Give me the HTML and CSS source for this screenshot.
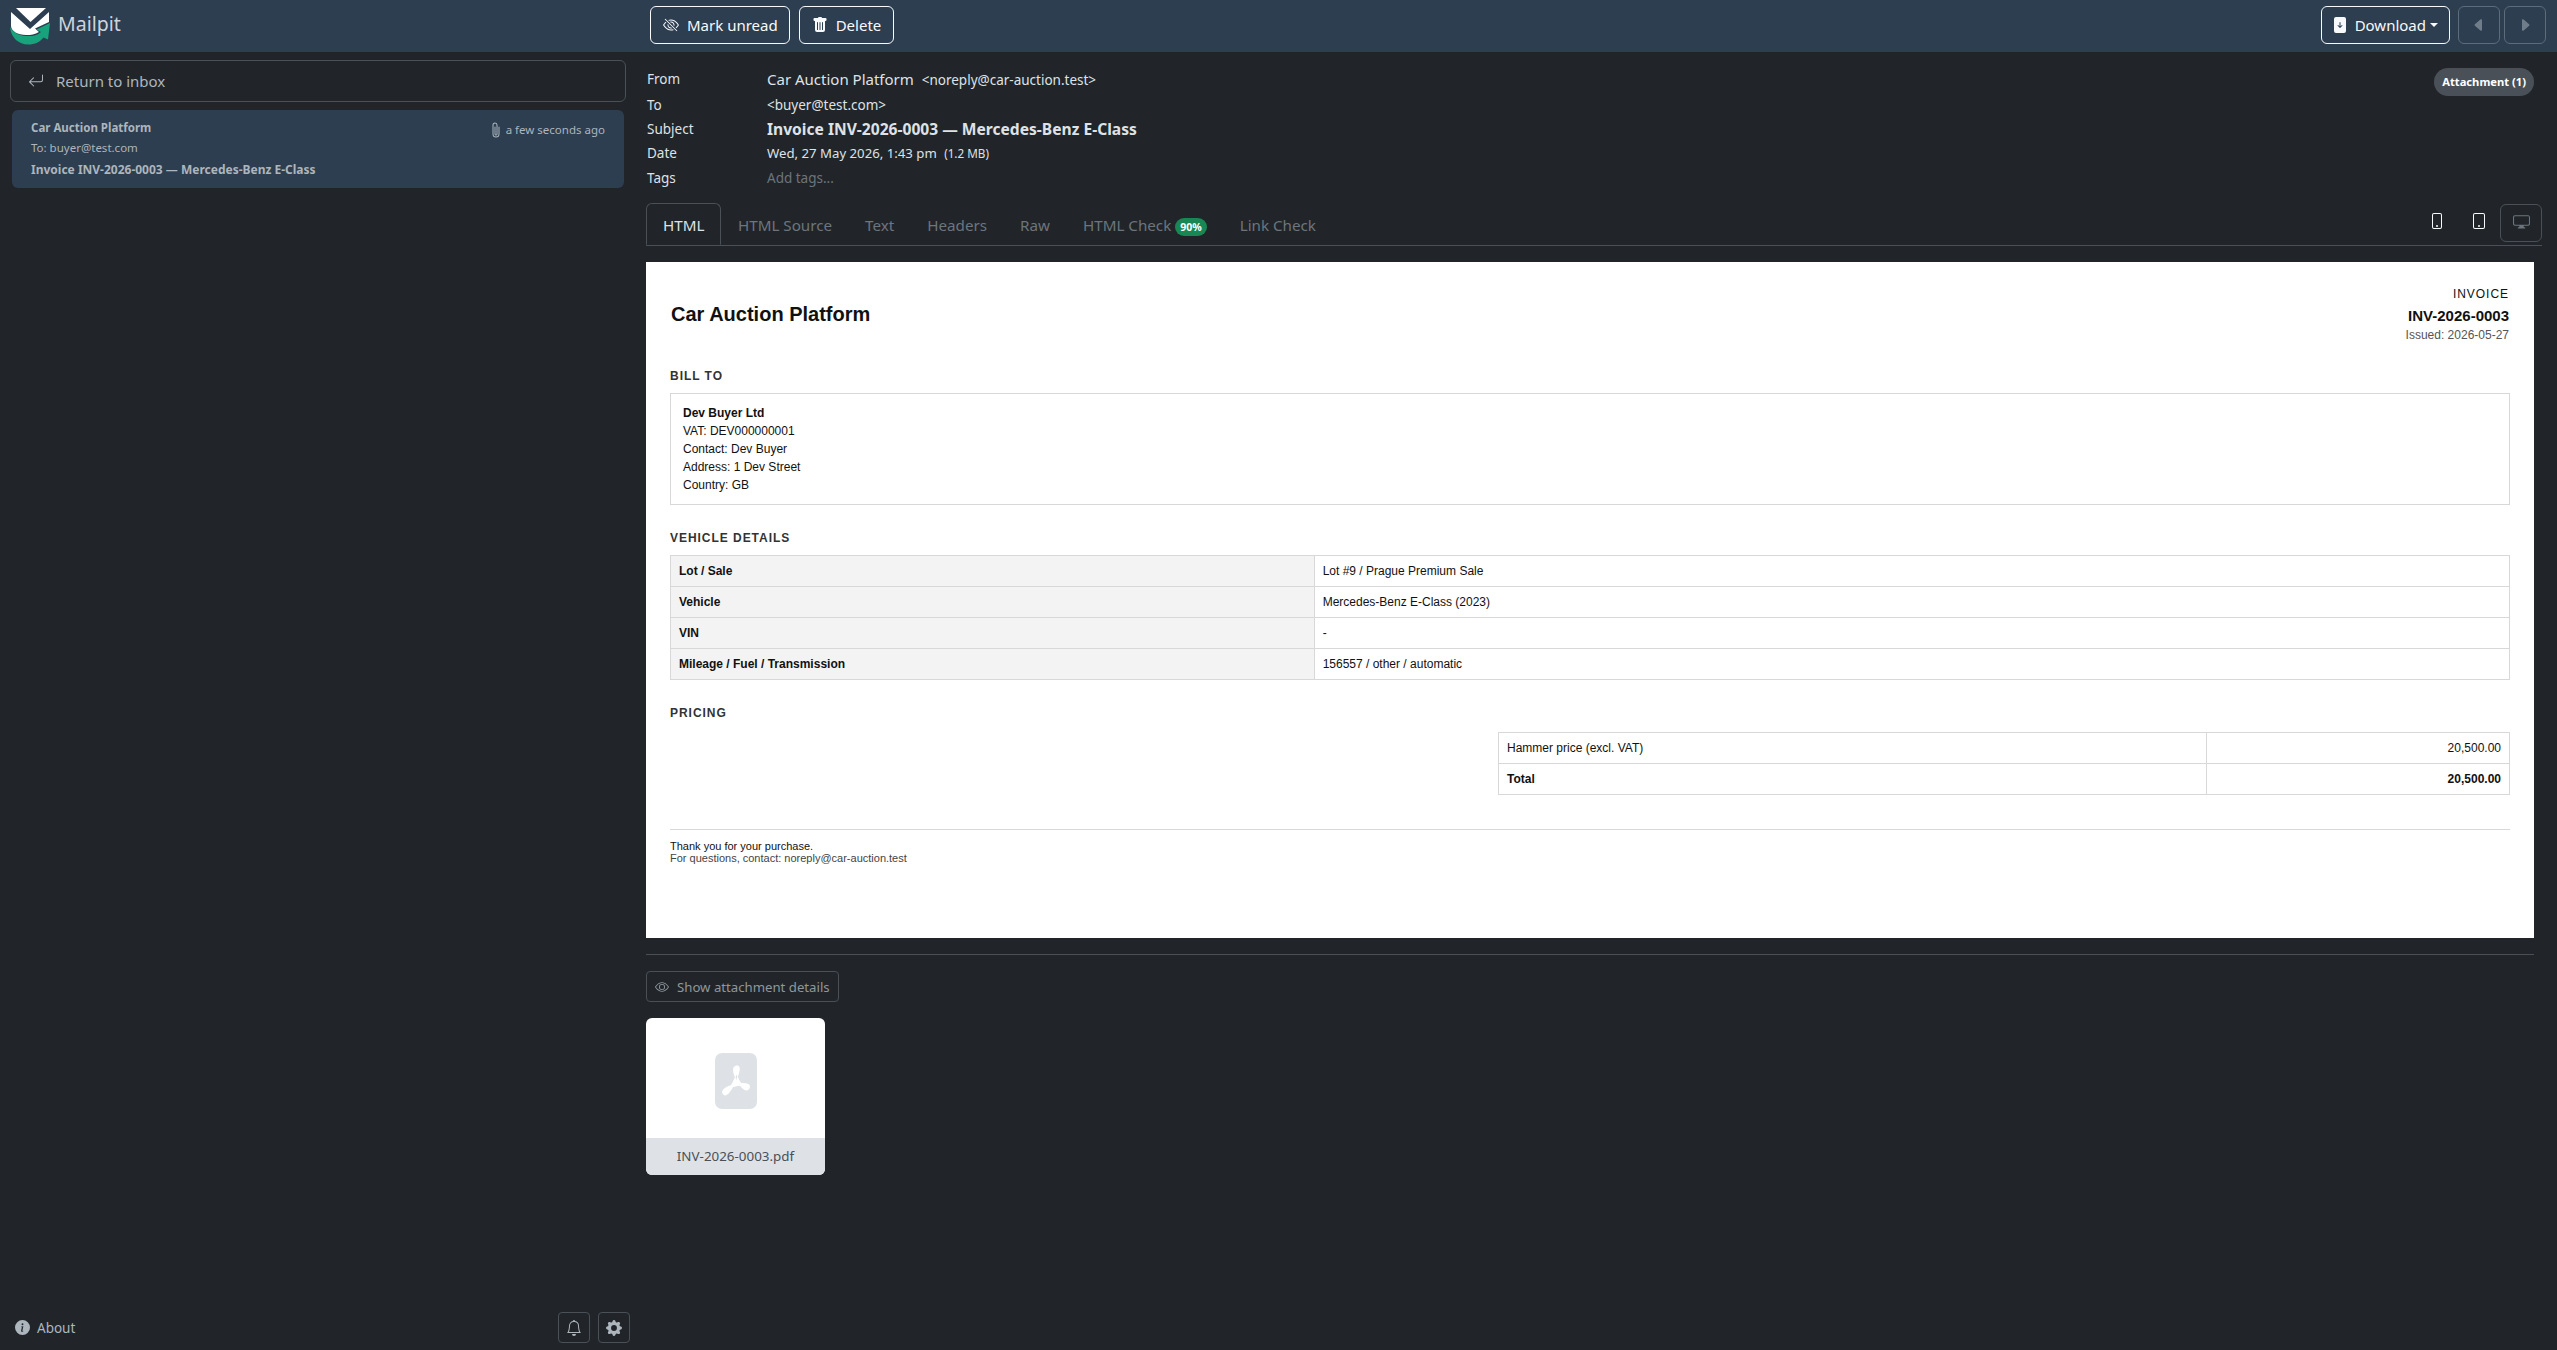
FILE: index.html
```html
<!DOCTYPE html>
<html lang="en">
<head>
    <meta charset="UTF-8">
    <meta name="viewport" content="width=device-width, initial-scale=1.0">
    <title>Invoice INV-2026-0003 — Mercedes-Benz E-Class - Mailpit</title>
    <link rel="stylesheet" href="styles.css">
</head>
<body>
    <header class="topbar">
        <div class="brand">
            <svg class="logo" viewBox="10 7 40 37" width="40" height="37">
                <path d="M10 26C11 37 19 43.500 28 43.500C35 43.500 40 41 43.500 36.500L48 38.500L50 22L36.500 28.500L41 31C37 34.500 32 35.500 26 35C18 34.500 13 31 10 26z" fill="#17a47d"/>
                <path d="M11 11L30 28L49 11V21L35 27.500L39 31C35 33.500 31 34 26 34C18 34 11 30 11 25z" fill="#fff"/>
                <path d="M16 7H46L30.500 21z" fill="#fff"/>
            </svg>
            <span class="brand-name">Mailpit</span>
        </div>
        <div class="actions">
            <button class="btn btn-mark">
                <svg viewBox="0 0 16 16" width="16" height="16" fill="currentColor"><path d="M13.359 11.238C15.060 9.720 16 8 16 8s-3-5.500-8-5.500a7 7 0 0 0-2.790.588l.770.771A6 6 0 0 1 8 3.500c2.120 0 3.879 1.168 5.168 2.457A13 13 0 0 1 14.828 8q-.086.130-.195.288c-.335.480-.830 1.120-1.465 1.755q-.247.248-.517.486z"/><path d="M11.297 9.176a3.500 3.500 0 0 0-4.474-4.474l.823.823a2.500 2.500 0 0 1 2.829 2.829zm-2.943 1.299.822.822a3.500 3.500 0 0 1-4.474-4.474l.823.823a2.500 2.500 0 0 0 2.829 2.829"/><path d="M3.350 5.470q-.270.240-.518.487A13 13 0 0 0 1.172 8l.195.288c.335.480.830 1.120 1.465 1.755C4.121 11.332 5.881 12.500 8 12.500c.716 0 1.390-.133 2.020-.360l.770.772A7 7 0 0 1 8 13.500C3 13.500 0 8 0 8s.939-1.721 2.641-3.238l.708.709zm10.296 8.884-12-12 .708-.708 12 12z"/></svg>
                Mark unread
            </button>
            <button class="btn">
                <svg viewBox="0 0 16 16" width="16" height="16" fill="currentColor"><path d="M2.500 1a1 1 0 0 0-1 1v1a1 1 0 0 0 1 1H3v9a2 2 0 0 0 2 2h6a2 2 0 0 0 2-2V4h.5a1 1 0 0 0 1-1V2a1 1 0 0 0-1-1H10a1 1 0 0 0-1-1H7a1 1 0 0 0-1 1zm3 4a.5.5 0 0 1 .5.5v7a.5.5 0 0 1-1 0v-7a.5.5 0 0 1 .5-.5M8 5a.5.5 0 0 1 .5.5v7a.5.5 0 0 1-1 0v-7A.5.5 0 0 1 8 5m3 .5v7a.5.5 0 0 1-1 0v-7a.5.5 0 0 1 1 0"/></svg>
                Delete
            </button>
            <div class="actions-right">
                <button class="btn btn-download">
                    <svg viewBox="0 0 16 16" width="16" height="16" fill="currentColor"><path d="M12 0H4a2 2 0 0 0-2 2v12a2 2 0 0 0 2 2h8a2 2 0 0 0 2-2V2a2 2 0 0 0-2-2M8 5a.5.5 0 0 1 .5.5v3.793l1.146-1.147a.5.5 0 0 1 .708.708l-2 2a.5.5 0 0 1-.708 0l-2-2a.5.5 0 1 1 .708-.708L7.500 9.293V5.500A.5.5 0 0 1 8 5"/></svg>
                    Download<span class="caret"></span>
                </button>
                <button class="btn btn-dim">
                    <svg viewBox="0 0 16 16" width="16" height="16" fill="currentColor"><path d="m3.860 8.753 5.482 4.796c.646.566 1.658.106 1.658-.753V3.204a1 1 0 0 0-1.659-.753l-5.480 4.796a1 1 0 0 0 0 1.506z"/></svg>
                </button>
                <button class="btn btn-dim">
                    <svg viewBox="0 0 16 16" width="16" height="16" fill="currentColor"><path d="m12.140 8.753-5.482 4.796c-.646.566-1.658.106-1.658-.753V3.204a1 1 0 0 1 1.659-.753l5.480 4.796a1 1 0 0 1 0 1.506z"/></svg>
                </button>
            </div>
        </div>
    </header>

    <div class="layout">
        <aside class="sidebar">
            <a class="back-link">
                <svg viewBox="0 0 16 16" width="16" height="16" fill="currentColor"><path d="M14.500 1.500a.5.5 0 0 1 .5.5v4.800a2.500 2.500 0 0 1-2.500 2.500H2.707l3.347 3.346a.5.5 0 0 1-.708.708l-4.200-4.200a.5.5 0 0 1 0-.708l4-4a.5.5 0 1 1 .708.708L2.707 8.300H12.500A1.500 1.500 0 0 0 14 6.800V2a.5.5 0 0 1 .5-.5"/></svg>
                Return to inbox
            </a>
            <div class="message-item">
                <div class="message-row">
                    <strong>Car Auction Platform</strong>
                    <span class="message-time">
                        <svg viewBox="0 0 16 16" width="16" height="16" fill="currentColor"><path d="M4.500 3a2.500 2.500 0 0 1 5 0v9a1.500 1.500 0 0 1-3 0V5a.5.5 0 0 1 1 0v7a.5.5 0 0 0 1 0V3a1.500 1.500 0 1 0-3 0v9a2.500 2.500 0 0 0 5 0V5a.5.5 0 0 1 1 0v7a3.500 3.500 0 1 1-7 0z"/></svg>
                        a few seconds ago
                    </span>
                </div>
                <div class="message-to">To: buyer@test.com</div>
                <div class="message-subject">Invoice INV-2026-0003 — Mercedes-Benz E-Class</div>
            </div>
            <div class="sidebar-footer">
                <a class="about">
                    <svg viewBox="0 0 16 16" width="15" height="15" fill="currentColor"><path d="M8 16A8 8 0 1 0 8 0a8 8 0 0 0 0 16m.930-9.412-1 4.705c-.070.340.029.533.304.533.194 0 .487-.070.686-.246l-.088.416c-.287.346-.920.598-1.465.598-.703 0-1.002-.422-.808-1.319l.738-3.468c.064-.293.006-.399-.287-.470l-.451-.081.082-.381 2.290-.287zM8 5.500a1 1 0 1 1 0-2 1 1 0 0 1 0 2"/></svg>
                    About
                </a>
                <div class="footer-buttons">
                    <button class="btn-small">
                        <svg viewBox="0 0 16 16" width="16" height="16" fill="currentColor"><path d="M8 16a2 2 0 0 0 2-2H6a2 2 0 0 0 2 2M8 1.918l-.797.161A4 4 0 0 0 4 6c0 .628-.134 2.197-.459 3.742-.160.767-.376 1.566-.663 2.258h10.244c-.287-.692-.502-1.490-.663-2.258C12.134 8.197 12 6.628 12 6a4 4 0 0 0-3.203-3.920zM14.220 12c.223.447.481.801.780 1H1c.299-.199.557-.553.780-1C2.680 10.200 3 6.880 3 6c0-2.420 1.720-4.440 4.005-4.901a1 1 0 1 1 1.990 0A5 5 0 0 1 13 6c0 .880.320 4.200 1.220 6"/></svg>
                    </button>
                    <button class="btn-small">
                        <svg viewBox="0 0 16 16" width="16" height="16" fill="currentColor"><path d="M9.405 1.050c-.413-1.400-2.397-1.400-2.810 0l-.100.340a1.464 1.464 0 0 1-2.105.872l-.310-.170c-1.283-.698-2.686.705-1.987 1.987l.169.311c.446.820.023 1.841-.872 2.105l-.340.100c-1.400.413-1.400 2.397 0 2.810l.340.100a1.464 1.464 0 0 1 .872 2.105l-.170.310c-.698 1.283.705 2.686 1.987 1.987l.311-.169a1.464 1.464 0 0 1 2.105.872l.100.340c.413 1.400 2.397 1.400 2.810 0l.100-.340a1.464 1.464 0 0 1 2.105-.872l.310.170c1.283.698 2.686-.705 1.987-1.987l-.169-.311a1.464 1.464 0 0 1 .872-2.105l.340-.100c1.400-.413 1.400-2.397 0-2.810l-.340-.100a1.464 1.464 0 0 1-.872-2.105l.170-.310c.698-1.283-.705-2.686-1.987-1.987l-.311.169a1.464 1.464 0 0 1-2.105-.872zM8 10.930a2.929 2.929 0 1 1 0-5.860 2.929 2.929 0 0 1 0 5.858z"/></svg>
                    </button>
                </div>
            </div>
        </aside>

        <main class="content">
            <section class="meta">
                <dl class="meta-list">
                    <dt>From</dt>
                    <dd>Car Auction Platform <span class="email">&lt;noreply@car-auction.test&gt;</span></dd>
                    <dt>To</dt>
                    <dd class="email">&lt;buyer@test.com&gt;</dd>
                    <dt>Subject</dt>
                    <dd class="subject">Invoice INV-2026-0003 — Mercedes-Benz E-Class</dd>
                    <dt>Date</dt>
                    <dd class="date">Wed, 27 May 2026, 1:43 pm <span class="size">(1.2 MB)</span></dd>
                    <dt>Tags</dt>
                    <dd class="tags-input">Add tags...</dd>
                </dl>
                <span class="attachment-pill">Attachment (1)</span>
            </section>

            <nav class="tabs">
                <a class="tab active">HTML</a>
                <a class="tab">HTML Source</a>
                <a class="tab">Text</a>
                <a class="tab">Headers</a>
                <a class="tab">Raw</a>
                <a class="tab">HTML Check <span class="score">90%</span></a>
                <a class="tab">Link Check</a>
                <div class="devices">
                    <button class="device">
                        <svg viewBox="0 0 16 16" width="16" height="16" fill="currentColor"><path d="M11 1a1 1 0 0 1 1 1v12a1 1 0 0 1-1 1H5a1 1 0 0 1-1-1V2a1 1 0 0 1 1-1zM5 0a2 2 0 0 0-2 2v12a2 2 0 0 0 2 2h6a2 2 0 0 0 2-2V2a2 2 0 0 0-2-2z"/><path d="M8 14a1 1 0 1 0 0-2 1 1 0 0 0 0 2"/></svg>
                    </button>
                    <button class="device">
                        <svg viewBox="0 0 16 16" width="16" height="16" fill="currentColor"><path d="M12 1a1 1 0 0 1 1 1v12a1 1 0 0 1-1 1H4a1 1 0 0 1-1-1V2a1 1 0 0 1 1-1zM4 0a2 2 0 0 0-2 2v12a2 2 0 0 0 2 2h8a2 2 0 0 0 2-2V2a2 2 0 0 0-2-2z"/><path d="M8 14a1 1 0 1 0 0-2 1 1 0 0 0 0 2"/></svg>
                    </button>
                    <button class="device device-active">
                        <svg viewBox="0 0 16 16" width="17" height="17" fill="currentColor"><path d="M0 4s0-2 2-2h12s2 0 2 2v6s0 2-2 2h-4q0 1 .250 1.500H11a.5.5 0 0 1 0 1H5a.5.5 0 0 1 0-1h.750Q6 13 6 12H2s-2 0-2-2zm1.398-.855a.760.760 0 0 0-.254.302A1.500 1.500 0 0 0 1 4.010V10c0 .325.078.502.145.602q.105.156.302.254a1.500 1.500 0 0 0 .538.143L2.010 11H14c.325 0 .502-.078.602-.145a.760.760 0 0 0 .254-.302 1.500 1.500 0 0 0 .143-.538L15 9.990V4c0-.325-.078-.502-.145-.602a.760.760 0 0 0-.302-.254A1.500 1.500 0 0 0 13.990 3H2c-.325 0-.502.078-.602.145z"/></svg>
                    </button>
                </div>
            </nav>

            <article class="invoice">
                <div class="invoice-head">
                    <h1>Car Auction Platform</h1>
                    <div class="invoice-ref">
                        <div class="ref-label">INVOICE</div>
                        <div class="ref-number">INV-2026-0003</div>
                        <div class="ref-date">Issued: 2026-05-27</div>
                    </div>
                </div>

                <h2>BILL TO</h2>
                <div class="bill-box">
                    <strong>Dev Buyer Ltd</strong><br>
                    VAT: DEV000000001<br>
                    Contact: Dev Buyer<br>
                    Address: 1 Dev Street<br>
                    Country: GB
                </div>

                <h2 class="section-next">VEHICLE DETAILS</h2>
                <table class="details">
                    <tr><th>Lot / Sale</th><td>Lot #9 / Prague Premium Sale</td></tr>
                    <tr><th>Vehicle</th><td>Mercedes-Benz E-Class (2023)</td></tr>
                    <tr><th>VIN</th><td>-</td></tr>
                    <tr><th>Mileage / Fuel / Transmission</th><td>156557 / other / automatic</td></tr>
                </table>

                <h2 class="section-next section-pricing">PRICING</h2>
                <table class="pricing">
                    <tr><td>Hammer price (excl. VAT)</td><td class="amount">20,500.00</td></tr>
                    <tr class="total"><td>Total</td><td class="amount">20,500.00</td></tr>
                </table>

                <footer class="invoice-foot">
                    Thank you for your purchase.<br>
                    <span>For questions, contact: noreply@car-auction.test</span>
                </footer>
            </article>

            <hr class="divider">

            <button class="show-details">
                <svg viewBox="0 0 16 16" width="14" height="14" fill="currentColor"><path d="M16 8s-3-5.500-8-5.500S0 8 0 8s3 5.500 8 5.500S16 8 16 8M1.173 8a13 13 0 0 1 1.660-2.043C4.120 4.668 5.880 3.500 8 3.500s3.879 1.168 5.168 2.457A13 13 0 0 1 14.828 8q-.086.130-.195.288c-.335.480-.830 1.120-1.465 1.755C11.879 11.332 10.119 12.500 8 12.500s-3.879-1.168-5.168-2.457A13 13 0 0 1 1.172 8z"/><path d="M8 5.500a2.500 2.500 0 1 0 0 5 2.500 2.500 0 0 0 0-5M4.500 8a3.500 3.500 0 1 1 7 0 3.500 3.500 0 0 1-7 0"/></svg>
                Show attachment details
            </button>

            <div class="attachment-card">
                <div class="attachment-thumb">
                    <svg viewBox="0 0 16 16" width="56" height="56" fill="#dee2e6"><path d="M5.523 12.424q.210-.124.459-.238a8 8 0 0 1-.450.606c-.280.337-.498.516-.635.572l-.035.012a.3.3 0 0 1-.026-.044c-.056-.110-.054-.216.040-.360.106-.165.319-.354.647-.548m2.455-1.647q-.178.037-.356.078a21 21 0 0 0 .500-1.050 12 12 0 0 0 .510.858q-.326.048-.654.114m2.525.939a4 4 0 0 1-.435-.410q.344.007.612.054c.317.057.466.147.518.209a.1.1 0 0 1 .026.064.440.440 0 0 1-.060.200.3.3 0 0 1-.094.124.1.1 0 0 1-.069.015c-.090-.003-.258-.066-.498-.256M8.278 6.970c-.040.244-.108.524-.200.829a5 5 0 0 1-.089-.346c-.076-.353-.087-.630-.046-.822.038-.177.110-.248.196-.283a.5.5 0 0 1 .145-.040c.013.030.028.092.032.198q.008.183-.038.465z"/><path fill-rule="evenodd" d="M4 0h8a2 2 0 0 1 2 2v12a2 2 0 0 1-2 2H4a2 2 0 0 1-2-2V2a2 2 0 0 1 2-2m.165 11.668c.090.180.230.343.438.419.207.075.412.040.580-.030.318-.130.635-.436.926-.786.333-.401.683-.927 1.021-1.510a11.600 11.600 0 0 1 1.997-.406c.3.383.610.713.910.950.280.220.603.403.934.417a.860.860 0 0 0 .510-.138c.155-.101.270-.247.354-.416.090-.181.145-.370.138-.563a.840.840 0 0 0-.200-.518c-.226-.270-.596-.4-.960-.465a5.800 5.800 0 0 0-1.335-.050 11 11 0 0 1-.980-1.686c.250-.660.437-1.284.520-1.794.036-.218.055-.426.048-.614a1.240 1.240 0 0 0-.127-.538.7.7 0 0 0-.477-.365c-.202-.043-.410 0-.601.077-.377.150-.576.470-.651.823-.073.340-.040.736.046 1.136.088.406.238.848.430 1.295a20 20 0 0 1-1.062 2.227 7.700 7.700 0 0 0-1.482.645c-.370.220-.699.480-.897.787-.210.326-.275.714-.080 1.103"/></svg>
                </div>
                <div class="attachment-name">INV-2026-0003.pdf</div>
            </div>
        </main>
    </div>
</body>
</html>
```

FILE: styles.css
```css
* {
    box-sizing: border-box;
}
html, body {
    height: 100%;
}
body {
    margin: 0;
    display: flex;
    flex-direction: column;
    overflow: hidden;
    background-color: #212529;
    color: #dee2e6;
    font-family: "Noto Sans", "Open Sans", sans-serif;
    font-size: 15px;
}
button {
    font-family: inherit;
}

/* top bar */
.topbar {
    display: flex;
    flex: none;
    height: 52px;
    background-color: #2c3e50;
}
.brand {
    display: flex;
    align-items: center;
    width: 650px;
    padding-left: 10px;
}
.logo {
    margin-top: 1px;
}
.brand-name {
    margin: -5px 0 0 8px;
    font-size: 19.5px;
    color: #ced4da;
}
.actions {
    display: flex;
    flex: 1;
    gap: 9px;
    padding: 6px 11px 0 0;
}
.actions-right {
    display: flex;
    gap: 4px;
    margin-left: auto;
}
.btn {
    display: flex;
    align-items: center;
    gap: 8px;
    height: 38px;
    padding: 0 12px;
    background: transparent;
    border: 1px solid #f8f9fa;
    border-radius: 6px;
    color: #f8f9fa;
    font-size: 15px;
}
.btn-mark {
    padding-right: 11px;
}
.btn-download {
    gap: 7px;
    margin-right: 4px;
    padding: 0 11px 0 10px;
}
.btn-dim {
    justify-content: center;
    width: 42px;
    padding: 0;
    border-color: #5d6b7a;
    color: #6f7c89;
}
.caret {
    width: 0;
    height: 0;
    margin-left: -3px;
    border: 4.8px solid transparent;
    border-top-color: #f8f9fa;
    border-bottom: 0;
}

/* sidebar */
.layout {
    display: flex;
    flex: 1;
    min-height: 0;
}
.sidebar {
    display: flex;
    flex: none;
    flex-direction: column;
    width: 646px;
    padding: 8px 20px 7px 10px;
}
.back-link {
    display: flex;
    align-items: center;
    gap: 12px;
    height: 42px;
    padding-left: 17px;
    border: 1px solid #495057;
    border-radius: 6px;
    color: #adb5bd;
    font-size: 15px;
}
.message-item {
    height: 78px;
    margin: 8px 2px 0;
    padding: 8px 19px;
    background-color: #2c3e50;
    border-radius: 6px;
    color: #adb5bd;
    font-size: 11.5px;
}
.message-row {
    display: flex;
    justify-content: space-between;
    align-items: flex-start;
    height: 20px;
    line-height: 20px;
}
.message-time {
    display: flex;
    align-items: center;
    gap: 2px;
    margin-top: 2px;
}
.message-to {
    line-height: 20px;
}
.message-subject {
    margin-top: 2px;
    font-size: 12px;
    font-weight: 700;
    line-height: 20px;
}
.sidebar-footer {
    display: flex;
    align-items: center;
    justify-content: space-between;
    margin-top: auto;
    padding-left: 5px;
}
.about {
    display: flex;
    align-items: center;
    gap: 7px;
    color: #adb5bd;
    font-size: 13.5px;
}
.footer-buttons {
    display: flex;
    gap: 8px;
    margin-right: -4px;
}
.btn-small {
    display: flex;
    align-items: center;
    justify-content: center;
    width: 32px;
    height: 31px;
    padding: 0;
    background: transparent;
    border: 1px solid #495057;
    border-radius: 4px;
    color: #adb5bd;
}

/* message header */
.content {
    flex: 1;
    min-width: 0;
    padding-right: 23px;
}
.meta {
    display: flex;
    justify-content: space-between;
    height: 152px;
    padding: 14px 0 0 1px;
}
.meta-list {
    display: grid;
    grid-template-columns: 120px 1fr;
    grid-template-rows: 26px 26px 21px 27px 24px;
    align-items: center;
    margin: 0;
}
dt {
    font-size: 13.5px;
}
dd {
    margin: 0;
    font-size: 15px;
}
.email {
    margin-left: 4px;
    font-size: 13.5px;
}
dd.email {
    margin-left: 0;
}
.subject {
    font-size: 15.6px;
    font-weight: 700;
}
.date {
    font-size: 13.2px;
}
.size {
    margin-left: 4px;
    font-size: 11.7px;
}
.tags-input {
    color: #6c757d;
    font-size: 13.5px;
}
.attachment-pill {
    align-self: flex-start;
    margin-top: 2px;
    padding: 0 8px;
    background-color: #495057;
    border-radius: 14px;
    color: #fff;
    font-size: 11.2px;
    font-weight: 700;
    line-height: 28px;
}

/* tabs */
.tabs {
    display: flex;
    align-items: flex-end;
    height: 42px;
    margin-right: -8px;
    border-bottom: 1px solid #495057;
}
.tab {
    height: 42px;
    padding: 0 16.5px;
    color: #6c757d;
    font-size: 15.2px;
    line-height: 44px;
    white-space: nowrap;
}
.tab.active {
    padding: 0 16px;
    border: 1px solid #495057;
    border-bottom-color: #212529;
    border-radius: 6px 6px 0 0;
    color: #dee2e6;
    line-height: 42px;
}
.score {
    display: inline-block;
    padding: 0 5px;
    background-color: #198754;
    border-radius: 10px;
    color: #fff;
    font-size: 10.5px;
    font-weight: 700;
    line-height: 18px;
}
.devices {
    display: flex;
    align-items: center;
    height: 38px;
    margin: 0 0 3px auto;
}
.device {
    width: 42px;
    height: 38px;
    padding: 0;
    background: transparent;
    border: 1px solid transparent;
    border-radius: 6px;
    color: #f8f9fa;
}
.device-active {
    border-color: #495057;
    color: #6c757d;
}

/* email body */
.invoice {
    height: 676px;
    margin-top: 16px;
    padding: 24px;
    background-color: #fff;
    color: #111;
    font-family: "Liberation Sans", Arial, sans-serif;
    font-size: 12px;
    line-height: 18px;
}
.invoice-head {
    display: flex;
    justify-content: space-between;
    height: 81px;
}
h1 {
    margin: 12px 0 0 1px;
    font-size: 20px;
    line-height: 32px;
}
.invoice-ref {
    padding: 1px 1px 0 0;
    text-align: right;
}
.ref-label {
    letter-spacing: .08em;
    line-height: 14px;
}
.ref-number {
    margin-top: 5px;
    font-size: 15px;
    font-weight: 700;
    line-height: 20px;
}
.ref-date {
    color: #555;
    line-height: 18px;
}
h2 {
    margin: 0 0 8px;
    color: #333;
    font-size: 12px;
    font-weight: 700;
    letter-spacing: .08em;
    line-height: 18px;
}
h2.section-next {
    margin-top: 24px;
}
h2.section-pricing {
    margin-bottom: 10px;
}
.bill-box {
    padding: 10px 12px;
    border: 1px solid #d8d8d8;
}
table {
    width: 100%;
    border-collapse: collapse;
}
th, td {
    padding: 6px 8px;
    border: 1px solid #d8d8d8;
    text-align: left;
    font-weight: 400;
    line-height: 18px;
}
.details th {
    width: 35%;
    background-color: #f3f3f3;
    font-weight: 700;
}
.pricing {
    width: 55%;
    margin-left: auto;
}
.pricing td:first-child {
    width: 70%;
}
td.amount {
    text-align: right;
}
.total td {
    font-weight: 700;
}
.invoice-foot {
    margin-top: 34px;
    padding-top: 10px;
    border-top: 1px solid #d8d8d8;
    font-size: 11px;
    line-height: 12px;
}
.invoice-foot span {
    color: #444;
}

/* attachments */
.divider {
    margin: 16px 0;
    border: 0;
    border-top: 1px solid #495057;
}
.show-details {
    display: flex;
    align-items: center;
    gap: 8px;
    height: 31px;
    padding: 0 8px;
    background: transparent;
    border: 1px solid #495057;
    border-radius: 4px;
    color: #8f979e;
    font-size: 13.2px;
}
.attachment-card {
    width: 179px;
    margin-top: 16px;
    background-color: #fff;
    border-radius: 6px;
    overflow: hidden;
}
.attachment-thumb {
    display: flex;
    align-items: center;
    justify-content: center;
    height: 120px;
    padding-top: 6px;
}
.attachment-name {
    height: 37px;
    background-color: #dee2e6;
    color: #495057;
    font-size: 13.4px;
    line-height: 37px;
    text-align: center;
}
```
